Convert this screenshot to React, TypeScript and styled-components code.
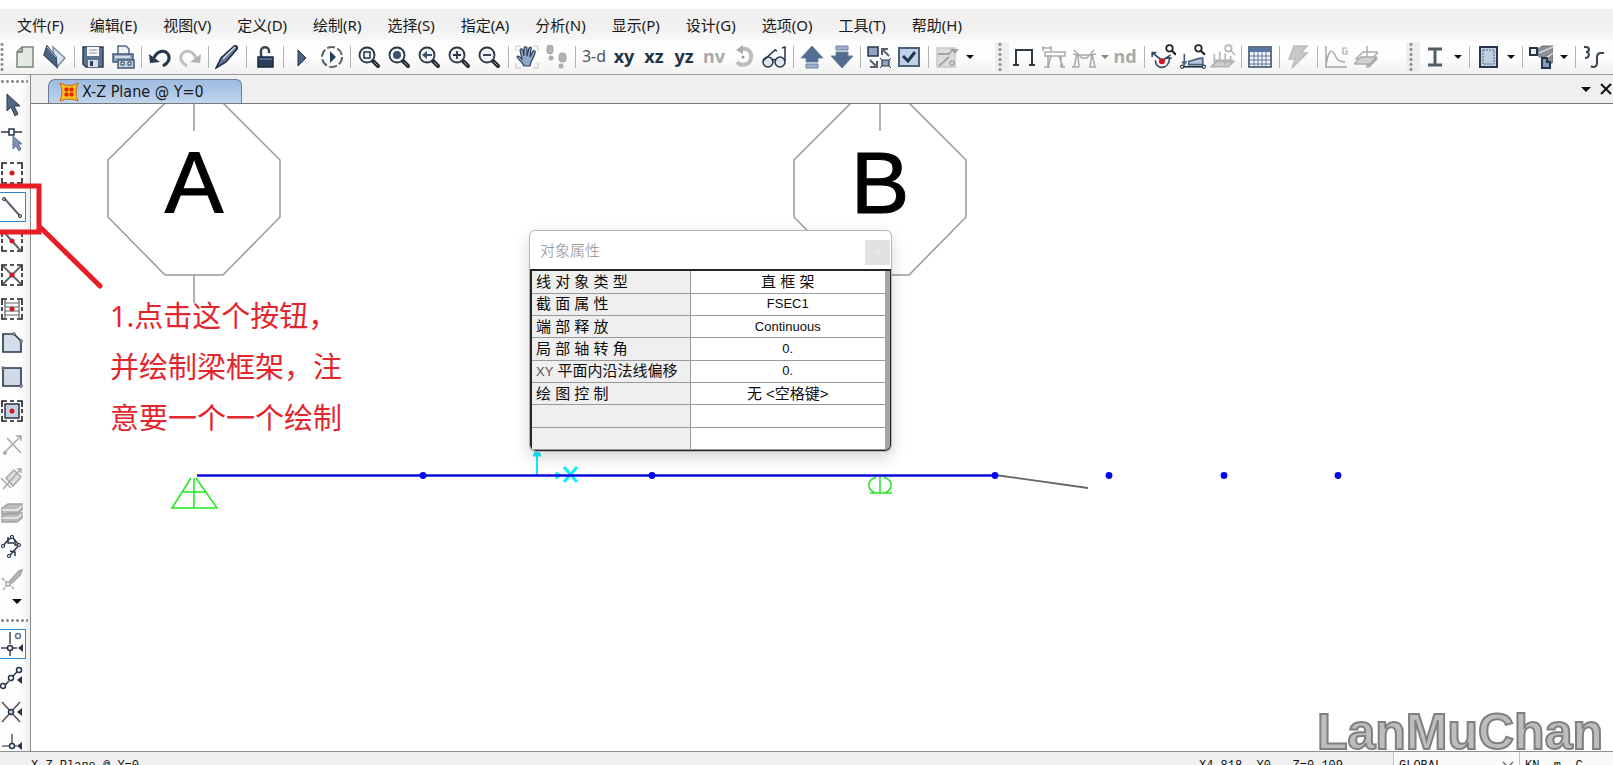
import React from 'react';
import styled, { createGlobalStyle } from 'styled-components';

const ink = '#26354a';
const steel = '#5f7797';
const pale = '#c9d6e8';
const off = '#a9a9a9';

const GlobalStyle = createGlobalStyle`
  * { box-sizing: border-box; }
  html, body { margin: 0; background: #fff; overflow: hidden; }
  body { font-family: "Noto Sans", "Noto Sans CJK SC", sans-serif; font-size: 15px; color: #1a1a1a; }
  button, select { font: inherit; color: inherit; }
  button { border: 0; padding: 0; background: none; }
`;

const Window = styled.div`
  position: relative;
  display: flex;
  flex-direction: column;
  height: 100vh;
  padding-top: 9px;
  overflow: hidden;
`;

const MenuBar = styled.nav`
  display: flex;
  flex: none;
  gap: 26px;
  height: 31px;
  padding: 0 17px;
  background: linear-gradient(#f0f0f0 60%, #f8f8f8);
`;

const MenuItem = styled.button`
  white-space: nowrap;
  line-height: 30px;
`;

const ToolbarRow = styled.div`
  display: flex;
  flex: none;
  height: 35px;
  background: linear-gradient(#fcfcfc, #fff 40%, #f1f1f1);
  border-bottom: 1px solid #9b9b9b;
  overflow: hidden;
`;

const Toolbar = styled.div<{ $end?: number }>`
  display: flex;
  flex: none;
  align-items: center;
  padding-right: ${p => p.$end ?? 0}px;
`;

const Grip = styled.div<{ $wide?: boolean }>`
  align-self: stretch;
  flex: none;
  width: ${p => (p.$wide ? 14 : 10)}px;
  margin: 2px 0;
  background:
    radial-gradient(circle, #8d8d8d 1px, transparent 2px) ${p => (p.$wide ? 3 : 0)}px 0 / 4px 5px repeat-y,
    ${p => (p.$wide ? '#eeeeee' : 'transparent')};
`;

const ToolButton = styled.button<{ $w?: number }>`
  display: flex;
  flex: none;
  align-items: center;
  justify-content: center;
  width: ${p => p.$w ?? 30}px;
  height: 30px;
`;

const Divider = styled.span<{ $w: number }>`
  flex: none;
  width: ${p => p.$w}px;
  height: 22px;
  background: linear-gradient(#b4b4b4, #b4b4b4) center / 1px 100% no-repeat;
`;

const ToolText = styled.span<{ $tone?: 'light' | 'off' }>`
  font-family: "Noto Sans", sans-serif;
  font-size: ${p => (p.$tone === 'light' ? 16 : 18)}px;
  font-weight: ${p => (p.$tone === 'light' ? 400 : 700)};
  line-height: 24px;
  white-space: nowrap;
  padding-bottom: 2px;
  color: ${p => (p.$tone === 'off' ? off : p.$tone === 'light' ? '#4a5560' : '#1f3444')};
`;

const Caret = styled.span<{ $tone?: string; $big?: boolean }>`
  border: ${p => (p.$big ? 5 : 4)}px solid transparent;
  border-top-color: ${p => p.$tone ?? '#111'};
  border-bottom: 0;
`;

const Workspace = styled.div`
  display: flex;
  flex: 1;
  min-height: 0;
`;

const SideBar = styled.aside`
  display: flex;
  flex: none;
  flex-direction: column;
  width: 30px;
  overflow: hidden;
  background: linear-gradient(90deg, #fdfdfd 70%, #efefef);
`;

const SideGrip = styled.div`
  flex: none;
  height: 13px;
  margin-right: 2px;
  background: radial-gradient(circle, #8d8d8d 1px, transparent 2px) 0 4px / 5px 5px repeat-x;
`;

const SideButton = styled.button<{ $on?: boolean }>`
  display: flex;
  flex: none;
  align-items: center;
  width: 26px;
  height: 30px;
  margin: 2px 0;
  background: ${p => (p.$on ? '#fff' : 'none')};
  border: 1px solid ${p => (p.$on ? '#2f86d2' : 'transparent')};
  border-left: 0;
`;

const SideMore = styled.button`
  display: flex;
  flex: none;
  justify-content: flex-end;
  align-items: flex-start;
  width: 22px;
  height: 16px;
  padding-top: 1px;
`;

const View = styled.main`
  display: flex;
  flex: 1;
  flex-direction: column;
  min-width: 0;
  border-left: 1px solid #8c8c8c;
`;

const TabStrip = styled.div`
  display: flex;
  flex: none;
  align-items: flex-end;
  justify-content: space-between;
  height: 29px;
  padding-left: 17px;
  background: #efefef;
  border-bottom: 1px solid #777;
`;

const Tab = styled.button`
  display: flex;
  align-items: center;
  gap: 3px;
  width: 194px;
  height: 24px;
  padding-left: 10px;
  font-family: "DejaVu Sans Condensed", "Noto Sans", sans-serif;
  font-size: 16px;
  line-height: 20px;
  white-space: nowrap;
  border: 1px solid #6c7d94;
  border-bottom: 0;
  border-radius: 7px 6px 0 0;
  background: linear-gradient(#9fbbe0, #a9c4e5 40%, #c0d6ee);
`;

const TabActions = styled.div`
  display: flex;
  align-self: center;
  gap: 8px;
`;

const SmallButton = styled.button`
  display: flex;
  align-items: center;
`;

const Canvas = styled.div`
  position: relative;
  flex: 1;
  min-height: 0;
  overflow: hidden;
  background: #fff;
`;

const Drawing = styled.svg`
  display: block;
  width: 100%;
  height: 100%;
`;

const GridLabel = styled.text`
  font-family: "Liberation Sans", Arial, sans-serif;
  font-size: 88px;
  text-anchor: middle;
  stroke: #000;
  stroke-width: 1px;
`;

const Dialog = styled.section`
  position: absolute;
  left: 498px;
  top: 126px;
  width: 363px;
  border: 1px solid #b5b5b5;
  border-radius: 6px;
  background: #fff;
  overflow: hidden;
  box-shadow: 0 6px 16px rgba(0, 0, 0, 0.16);
`;

const DialogHead = styled.header`
  display: flex;
  align-items: center;
  justify-content: space-between;
  height: 38px;
  padding-left: 10px;
`;

const DialogTitle = styled.h2`
  margin: 0;
  font-size: 15px;
  font-weight: 300;
  line-height: 20px;
  color: #8c8c8c;
`;

const DialogClose = styled.button`
  display: flex;
  align-items: center;
  justify-content: center;
  align-self: flex-end;
  width: 25px;
  height: 25px;
  margin: 0 1px 4px;
  background: #e2e2e2;
`;

const TableFrame = styled.div`
  padding-right: 5px;
  border: 2px solid #262626;
  border-width: 2px 1px 1px 2px;
  border-radius: 0 0 6px 6px;
  background: #a5a5a5;
`;

const PropTable = styled.table`
  width: 100%;
  height: 179px;
  table-layout: fixed;
  border-collapse: collapse;
  font-family: "Liberation Sans", "Noto Sans CJK SC", sans-serif;
  line-height: 16px;
  color: #0c0c0c;
`;

const PropRow = styled.tr`
  height: 22px;
`;

const PropName = styled.th`
  width: 158px;
  padding: 0 0 0 4px;
  font-weight: 400;
  text-align: left;
  white-space: nowrap;
  background: #efefef;
  border: solid #9a9a9a;
  border-width: 0 1px 1px 0;
`;

const PropValue = styled.td<{ $latin?: boolean }>`
  padding: 0;
  font-size: ${p => (p.$latin ? 13 : 15)}px;
  text-align: center;
  white-space: nowrap;
  background: #fff;
  border-bottom: 1px solid #9a9a9a;
`;

const Latin = styled.span`
  font-size: 13px;
  color: #555;
`;

const Note = styled.p`
  position: absolute;
  left: 79px;
  top: 186px;
  margin: 0;
  font-family: "Noto Sans", "Noto Sans CJK SC", sans-serif;
  font-size: 29px;
  line-height: 51px;
  white-space: nowrap;
  color: #e3262e;
`;

const Callout = styled.svg`
  position: absolute;
  left: 0;
  top: 180px;
  pointer-events: none;
`;

const Watermark = styled.div`
  position: absolute;
  right: 10px;
  bottom: 5px;
  font-family: "Liberation Sans", Arial, sans-serif;
  font-size: 50px;
  font-weight: 700;
  line-height: 56px;
  color: #bdbdbd;
  -webkit-text-stroke: 2px #808080;
`;

const StatusBar = styled.footer`
  display: flex;
  flex: none;
  align-items: flex-start;
  height: 14px;
  padding-left: 31px;
  overflow: hidden;
  font-family: "Liberation Mono", monospace;
  font-size: 12px;
  line-height: 16px;
  color: #111;
  background: #f0f0f0;
  border-top: 1px solid #8f8f8f;
`;

const StatusText = styled.span<{ $grow?: boolean }>`
  flex: ${p => (p.$grow ? 1 : 'none')};
  padding-top: 6px;
  white-space: pre;
`;

const Coordinates = styled(StatusText)`
  padding-right: 50px;
`;

const StatusField = styled.label`
  display: flex;
  flex: none;
  align-items: center;
  height: 26px;
  background: #fafafa;
  border-left: 1px solid #c4c4c4;
`;

const StatusSelect = styled.select<{ $w: number }>`
  width: ${p => p.$w}px;
  height: 26px;
  padding: 2px 0 0 5px;
  appearance: none;
  border: 0;
  border-radius: 0;
  background: none;
`;

const Svg = ({ children, s = 24 }: { children: React.ReactNode; s?: number }) => (
  <svg width={s} height={s} viewBox="0 0 24 24" fill="none" stroke={ink} strokeWidth="1.5" aria-hidden="true">
    {children}
  </svg>
);

const Lens = ({ children }: { children: React.ReactNode }) => (
  <Svg>
    <path d="M15 15l6 6" stroke="#222b36" strokeWidth="4" strokeLinecap="round" />
    <path d="M17 17l3.500 3.500" stroke="#8a96a5" strokeWidth="1" />
    <circle cx="10" cy="10" r="7.500" fill="#f1f4f8" stroke="#2c3440" strokeWidth="1.800" />
    {children}
  </Svg>
);

type Tool = { label: string; icon?: React.ReactNode; w?: number; sep?: number };
const sep = (w = 7): Tool => ({ label: '', sep: w });
const caret = (label: string, w = 16, tone?: string): Tool => ({ label, w, icon: <Caret $tone={tone} /> });

const mainTools: Tool[] = [
  { label: '新建', icon: <Svg><path d="M9 2h11v20H4V7z" fill="#e3e9e3" stroke="#7c877a" /><path d="M9 2v5H4" stroke="#6b7568" /></Svg> },
  { label: '打开', icon: <Svg><path d="M10 2l12 11-8 9-3-9z" fill="#dbe4ef" stroke="#7d8ea3" /><path d="M4 1l9 11 1 10L1 10z" fill="#4c6283" stroke="#3c4e6a" /><path d="M4 2l9 10" stroke="#b9c8da" strokeWidth="1" /></Svg> },
  sep(8),
  { label: '保存', icon: <Svg><path d="M2 2h20v20H5l-3-3z" fill="#5c7291" stroke="#2c3d55" /><path d="M6 2h12v9H6z" fill="#f4f6f8" stroke="none" /><path d="M8 5h8M8 8h8" stroke="#8b98a8" strokeWidth="1" /><path d="M7 15h10v7H7z" fill="#d5e0ec" stroke="none" /><path d="M9 16h3v5H9z" fill="#2c3d55" stroke="none" /></Svg> },
  { label: '打印', icon: <Svg><path d="M7 9V1h8l3 3v5" fill="#eef2f6" stroke="#55677f" /><path d="M2 9h20v8H2z" fill="#8ea2bd" stroke="#45597a" /><path d="M4 12h15" stroke="#e8eef6" /><path d="M7 15h16v8H7z" fill="#c3d3e6" stroke="#45597a" /><path d="M10 17h3v3h-3zM17 17h3v3h-3z" fill="#fff" strokeWidth="1" /></Svg> },
  sep(),
  { label: '撤销', icon: <Svg><path d="M6 13c3-7 10-9 14-4 3 5 0 9-5 12" stroke="#27364a" strokeWidth="3" /><path d="M1 9l1 9 10-1z" fill="#27364a" stroke="none" /></Svg> },
  { label: '重做', icon: <Svg><path d="M18 13C15 6 8 4 4 9c-3 5 0 9 5 12" stroke="#c0c0c0" strokeWidth="3" /><path d="M23 9l-1 9-10-1z" fill="#b3b3b3" stroke="none" /></Svg> },
  sep(),
  { label: '绘制', icon: <Svg><path d="M1 23l5-10L19 1c2-1 4 1 3 3L11 17z" fill="#60779b" stroke="#1f2d42" /><path d="M8 14L20 2" stroke="#cbd7e7" /></Svg> },
  sep(8),
  { label: '锁定', icon: <Svg><path d="M8 12V6c0-5 8-5 8 0v2" stroke="#3b4350" strokeWidth="2.500" /><path d="M5 12h15v10H5z" fill="#2c3f5b" stroke="#1c2a3f" /><path d="M6 14h13" stroke="#60779b" /></Svg> },
  sep(),
  { label: '运行', icon: <Svg><path d="M8 5l8 8-8 8z" fill="#4a6384" stroke="#20344f" strokeWidth="1" /></Svg> },
  { label: '运行分析', icon: <Svg><circle cx="12" cy="12" r="10" strokeWidth="2" strokeDasharray="8 2.470" stroke="#5a646f" /><path d="M10 6l6 6-6 6z" fill="#263f5e" stroke="none" /></Svg> },
  sep(),
  { label: '框选缩放', icon: <Lens><path d="M7 7h6v6H7z" strokeWidth="1.500" /></Lens> },
  { label: '全部缩放', icon: <Lens><circle cx="10" cy="10" r="4" fill="#3d516f" stroke="none" /></Lens> },
  { label: '上一缩放', icon: <Lens><path d="M5 10l5-4v3h5v2h-5v3z" fill="#3d516f" stroke="none" /></Lens> },
  { label: '放大', icon: <Lens><path d="M6 10h8M10 6v8" strokeWidth="1.800" /></Lens> },
  { label: '缩小', icon: <Lens><path d="M6 10h8" strokeWidth="1.800" /></Lens> },
  sep(8),
  { label: '平移', icon: <Svg><path d="M1 6V1h5M18 1h5v5M23 18v5h-5M6 23H1v-5" stroke="#c4c4c4" strokeWidth="1" /><path d="M9 21c-1-3-5-6-7-9 1-2 3 0 5 2L5 5c1-2 3-1 3 1l1 5V3c1-2 3-1 3 0v8l2-8c1-1 3-1 2 1l-1 8 3-6c1-1 3 0 2 2-1 4-3 7-4 9l-1 4z" fill="#8fa6c6" stroke="#30425c" strokeWidth="1.200" /></Svg> },
  { label: '漫游', icon: <Svg><g fill="#b3b3b3" stroke="#999" strokeWidth=".8"><rect x="2" y="0" width="6" height="9" rx="3" /><rect x="4" y="11" width="4" height="4" rx="1.500" /><rect x="14" y="8" width="7" height="9" rx="3" /><rect x="14" y="19" width="4" height="4" rx="1.500" /></g></Svg> },
  sep(),
  { label: '三维视图', icon: <ToolText $tone="light">3-d</ToolText> },
  { label: 'XY 平面', icon: <ToolText>xy</ToolText> },
  { label: 'XZ 平面', icon: <ToolText>xz</ToolText> },
  { label: 'YZ 平面', icon: <ToolText>yz</ToolText> },
  { label: 'NV 平面', icon: <ToolText $tone="off">nv</ToolText> },
  { label: '旋转', icon: <Svg><path d="M10 4c7-1 10 4 9 9-1 7-10 9-14 4" stroke="#bdbdbd" strokeWidth="4" /><path d="M11 0v9L4 5z" fill="#adadad" stroke="none" /><circle cx="11" cy="12" r="1.500" fill="#999" stroke="none" /></Svg> },
  { label: '显示选项', icon: <Svg><circle cx="6" cy="17" r="5" fill="#dfe6ee" /><circle cx="18" cy="17" r="5" fill="#dfe6ee" /><path d="M10 16c1-2 3-2 4 0M1 16L13 5l2 1M23 16V2l-3 1" /></Svg> },
  sep(8),
  { label: '上移', icon: <Svg><path d="M12 1l11 12h-5v4H6v-4H1z" fill="#536d92" stroke="#6d83a2" strokeWidth="1" /><path d="M6 19h12v4H6z" fill="#9db1ca" stroke="#6d83a2" strokeWidth="1" /></Svg> },
  { label: '下移', icon: <Svg><path d="M12 23L1 11h5V7h12v4h5z" fill="#536d92" stroke="#6d83a2" strokeWidth="1" /><path d="M6 1h12v4H6z" fill="#9db1ca" stroke="#6d83a2" strokeWidth="1" /></Svg> },
  sep(),
  { label: '对象收缩', icon: <Svg><path d="M1 2h10v9H1z" fill="#8ea4c2" /><path d="M22 11l-6-6M15 10V4h6M3 15l6 6M3 22h7v-6" stroke="#55606c" strokeWidth="2" /><path d="M15 15h7v6h-7z" fill="#8ea4c2" strokeWidth="1.200" /><path d="M13 13l2 2M24 13l-2 2M13 23l2-2M24 23l-2-2" strokeWidth="1" /></Svg> },
  { label: '显示设置', icon: <Svg><path d="M2 3h20v18H2z" fill="#c0d1e8" stroke="#4c6078" strokeWidth="2" /><path d="M6 11l5 5 7-9" strokeWidth="3" stroke="#24384f" /></Svg> },
  sep(8),
  { label: '指定', icon: <Svg><path d="M2 3h18v19H2z" fill="#dcdcdc" stroke="#c8c8c8" /><path d="M3 9h11l4-5M4 21l10-9" stroke="#a3a3a3" strokeWidth="2" /><path d="M15 4h9l-4 5z" fill="#a3a3a3" stroke="none" /><circle cx="17" cy="18" r="2" stroke="#a3a3a3" /></Svg> },
  caret('指定选项'),
];

const displayTools: Tool[] = [
  { label: '未变形', icon: <Svg><path d="M4 21V5h16v16M1 20h6M17 20h6" stroke="#2e3a46" strokeWidth="2" /></Svg> },
  { label: '显示荷载', icon: <Svg><g stroke={off}><path d="M1 1v5M9 1v5M1 3h8" /><path d="M3 7h20v4H3zM6 11v11M9 11L6 22M19 11v11M17 11l4 11M2 22h6M18 22h5" /></g></Svg> },
  { label: '显示变形', icon: <Svg><g stroke={off}><path d="M1 9l5 1h13l5-1M2 5l8 8h5l7-8" /><path d="M5 9L2 22M6 10l1 12M20 9l-2 13M20 9l3 13M0 22h7M17 22h7" /></g></Svg> },
  caret('变形选项', 11, '#888'),
  { label: 'ND', icon: <ToolText $tone="off">nd</ToolText> },
  sep(8),
  { label: '节点查看', icon: <Svg s={26}><path d="M11 15L2 8M2 12V8h4M12 15l7-5M5 15c0 9 12 9 13-1M15 13h5" stroke="#334760" /><circle cx="11" cy="16" r="2.800" fill="#d3161f" stroke="none" /><circle cx="18" cy="4" r="3" stroke="#222" strokeWidth="1.600" /><path d="M20 6l4 4" stroke="#222" strokeWidth="2" /></Svg> },
  { label: '框架查看', icon: <Svg s={26}><path d="M4 9v10M2 16l2 3 2-3M8 19v-3c4 0 6-3 13-3v6z" fill="#b4c6df" stroke="#47607f" /><path d="M2 21h20" stroke="#1d2c42" /><circle cx="2" cy="21" r="1.500" fill="#fff" strokeWidth="1" /><circle cx="22" cy="21" r="1.500" fill="#fff" strokeWidth="1" /><circle cx="17" cy="4" r="3" stroke="#222" strokeWidth="1.600" /><path d="M19 6l4 4" stroke="#222" strokeWidth="2" /></Svg> },
  { label: '面查看', icon: <Svg s={26}><g stroke="#b4b4b4"><path d="M1 21l5-5h16l-5 5z" fill="#ccc" /><path d="M4 9v9M9 7v9M14 9v10M19 11v7M3 15h18" /><circle cx="17" cy="4" r="3" /><path d="M19 6l4 4" /></g></Svg> },
  sep(),
  { label: '表格', icon: <Svg><path d="M1 2h22v20H1z" fill="#f2f6fb" stroke="#30455f" strokeWidth="1.500" /><path d="M2 3h20v4H2z" fill="#5877a5" stroke="none" /><path d="M2 11h20M2 15h20M2 19h20M6 7v15M10 7v15M14 7v15M18 7v15" stroke="#60779b" strokeWidth="1" /></Svg> },
  sep(8),
  { label: '快速分析', icon: <Svg><path d="M8 1h13l-6 7h6L6 23l3-9H3z" fill="#c8c8c8" stroke="#bcbcbc" /></Svg> },
  sep(8),
  { label: '曲线', icon: <Svg><path d="M2 1v21h21M2 20C5 2 8 4 12 12c2 4 5 5 9 5" stroke="#a6a6a6" /><path d="M23 3h-4v6h4V6h-2" stroke="#a6a6a6" strokeWidth="1.200" /></Svg> },
  { label: '层显示', icon: <Svg><g stroke="#adadad"><path d="M9 7h15l-6 7H2zM13 1v22" /><path d="M0 19l7-7h15l-6 7z" fill="#d2d2d2" /><path d="M14 22l9-9" strokeWidth="3" /></g></Svg> },
];

const sectionTools: Tool[] = [
  { label: '框架截面', icon: <Svg><path d="M5 4h14M5 20h14" stroke="#525c65" strokeWidth="3" /><path d="M12 4v16" stroke="#525c65" strokeWidth="3" /></Svg> },
  caret('框架截面选项'),
  sep(),
  { label: '面截面', icon: <Svg><path d="M4 2h17v20H4z" fill="#bfcfe2" stroke="#27364a" strokeWidth="2" /><path d="M7 5h11v14H7z" stroke="#55677f" strokeDasharray="2 1" strokeWidth="1" /></Svg> },
  caret('面截面选项'),
  sep(),
  { label: '实体截面', icon: <Svg><path d="M9 4l4-3h11v7l-9 4h-5zM16 16l8-7v8l-6 5z" fill="#8a9095" stroke="#6c7277" strokeWidth="1" /><path d="M10 8L24 2M16 14l8-6" stroke="#d8d8d8" /><path d="M1 3h7v7H1z" fill="#eee" strokeWidth="2" /><path d="M13 13h5v4h3v6h-8z" fill="#7f9cc4" strokeWidth="2" /></Svg> },
  caret('实体截面选项'),
  sep(),
  { label: '连接', icon: <Svg><path d="M2 2h2c4 0 4 5 0 5 4 0 4 6-1 6M22 8h-3c-3 0-4 1-4 4v6c0 4-4 5-6 3" stroke="#3b4550" strokeWidth="2" /></Svg> },
];

const frameCorners = 'M2 8V2h5M10 2h4M17 2h5v6M22 10v4M22 17v5h-5M14 22h-4M7 22H2v-5M2 14v-4';
const Dashed = ({ children }: { children?: React.ReactNode }) => (
  <Svg><path d={frameCorners} stroke="#1c1c1c" strokeWidth="1.600" />{children}</Svg>
);
const RedDot = () => <circle cx="12" cy="12" r="2.500" fill="#d3161f" stroke="none" />;

const drawTools: Tool[] = [
  { label: '选择', icon: <Svg><path d="M7 1v17l4-4 4 9 3-2-4-8h6z" fill="#536781" stroke="#2b3b50" strokeWidth="1" /></Svg> },
  { label: '重塑', icon: <Svg><path d="M1 5h21" strokeWidth="1.500" /><path d="M9 2h5v6H9z" fill="#fff" /><path d="M13 9v13l3-3 3 5 2-2-3-5h4z" fill="#7c93b2" stroke="#5f7797" strokeWidth="1" /></Svg> },
  { label: '绘制节点', icon: <Dashed><RedDot /></Dashed> },
  { label: '绘制框架', icon: <Svg><path d="M4 3l16 18" stroke="#5a646e" strokeWidth="2" /><circle cx="4" cy="4" r="1.500" fill="#ccc" strokeWidth="1" /><circle cx="20" cy="21" r="1.500" fill="#ccc" strokeWidth="1" /></Svg> },
  { label: '快速绘制框架', icon: <Dashed><path d="M3 2l18 20" strokeWidth="2" stroke="#5a646e" /><RedDot /></Dashed> },
  { label: '快速绘制支撑', icon: <Dashed><path d="M3 3l18 18M21 3L3 21" strokeWidth="1.800" stroke="#5a646e" /><RedDot /></Dashed> },
  { label: '快速绘制次梁', icon: <Dashed><path d="M5 2v20M19 2v20M5 6h14M5 10h14M5 14h14M5 18h14" strokeWidth="1.200" stroke="#5a646e" /><RedDot /></Dashed> },
  { label: '绘制多边形面', icon: <Svg><path d="M3 3h11l7 7v11H3z" fill="#d3deec" strokeWidth="1.600" /><circle cx="14" cy="3" r="1.500" fill="#999" strokeWidth=".5" /><circle cx="21" cy="10" r="1.500" fill="#999" strokeWidth=".5" /></Svg> },
  { label: '绘制矩形面', icon: <Svg><path d="M3 3h18v18H3z" fill="#cfdae9" strokeWidth="1.600" /><circle cx="3" cy="3" r="1.500" fill="#999" strokeWidth=".5" /><circle cx="21" cy="21" r="1.500" fill="#999" strokeWidth=".5" /></Svg> },
  { label: '快速绘制面', icon: <Dashed><path d="M5 5h14v14H5z" fill="#c3d1e3" /><RedDot /></Dashed> },
  { label: '绘制连接', icon: <Svg><path d="M7 5l14 15M4 20L21 3M16 3h5v5" stroke={off} strokeWidth="1.500" /><circle cx="5" cy="20" r="2" fill={off} stroke="none" /></Svg> },
  { label: '绘制面连接', icon: <Svg><path d="M6 11l8-8 7 7-8 9z" fill="#ddd" stroke={off} /><path d="M1 11l10 10M3 22L21 2M17 2h4v4" stroke={off} /></Svg> },
  { label: '绘制实体', icon: <Svg><path d="M2 7l6-4h14v6l-5 4H2zM2 15l6-3h14v5l-5 4H2z" fill="#bbb" stroke="#a3a3a3" /><path d="M2 9h15l5-4M2 17h15l5-4" stroke="#eee" /></Svg> },
  { label: '绘制参考点', icon: <Svg><path d="M3 11l4-5 5-4 7 8M9 21l4-4 6-7" /><path d="M8 2v6h6M15 5v5h5M10 16l5 1v4" /><g fill="#fff" strokeWidth="1.200"><circle cx="3" cy="11" r="1.500" /><circle cx="12" cy="2" r="1.500" /><circle cx="19" cy="10" r="1.500" /><circle cx="9" cy="21" r="1.500" /></g></Svg> },
  { label: '编辑绘制', icon: <Svg><path d="M10 12l9-10 3-1-2 5-8 8z" fill="#bbb" stroke="#a3a3a3" /><path d="M2 9l4 4M3 21l4-5M14 20l-4-4" stroke={off} strokeDasharray="3 1" /><circle cx="8" cy="15" r="2" stroke={off} /></Svg> },
];

const snapMark = <path d="M23 12v8l-5-4z" fill={ink} stroke="none" />;
const snapTools: Tool[] = [
  { label: '捕捉节点', icon: <Svg><path d="M10 0v12M10 19v5M1 16h6M13 16h4" stroke="#444" /><circle cx="10" cy="16" r="2.500" /><circle cx="18" cy="4" r="2.500" stroke={steel} />{snapMark}</Svg> },
  { label: '捕捉端点和中点', icon: <Svg><path d="M5 19l4-4M13 10l4-4" /><circle cx="3" cy="20" r="2.500" /><circle cx="11" cy="12" r="2.500" /><circle cx="19" cy="4" r="2.500" /><path d="M22 10v8l-5-4z" fill={ink} stroke="none" /></Svg> },
  { label: '捕捉交点', icon: <Svg><path d="M2 2l18 20M20 2L2 22" stroke="#555" strokeWidth="1.600" /><circle cx="11" cy="12" r="2.500" fill={pale} /><path d="M22 8v8l-5-4z" fill={ink} stroke="none" /></Svg> },
  { label: '捕捉垂足', icon: <Svg><path d="M12 0v9M2 12h8M14 12h3" stroke="#666" strokeWidth="1.600" /><circle cx="12" cy="12" r="2.500" /><path d="M22 8v8l-5-4z" fill={ink} stroke="none" /></Svg> },
];

const menus = ['文件(F)', '编辑(E)', '视图(V)', '定义(D)', '绘制(R)', '选择(S)', '指定(A)', '分析(N)', '显示(P)', '设计(G)', '选项(O)', '工具(T)', '帮助(H)'];

const properties: { name: React.ReactNode; value: string; latin?: boolean }[] = [
  { name: '线 对 象 类 型', value: '直 框 架' },
  { name: '截 面 属 性', value: 'FSEC1', latin: true },
  { name: '端 部 释 放', value: 'Continuous', latin: true },
  { name: '局 部 轴 转 角', value: '0.', latin: true },
  { name: <><Latin>XY</Latin> 平面内沿法线偏移</>, value: '0.', latin: true },
  { name: '绘 图 控 制', value: '无 <空格键>' },
  { name: '', value: '' },
  { name: '', value: '' },
];

const Tools = ({ items }: { items: Tool[] }) => (
  <>
    {items.map((t, i) =>
      t.sep ? <Divider key={i} $w={t.sep} /> : <ToolButton key={i} $w={t.w} aria-label={t.label}>{t.icon}</ToolButton>
    )}
  </>
);

/* Grid bubble: an octagon hung on its grid line, drawn around x = 0. */
const GridBubble = ({ x, name }: { x: number; name: string }) => (
  <g transform={`translate(${x} 0)`}>
    <path d="M-29 -1L-86 56V113L-29 171H29L86 113V56L29 -1M0 0V27M0 171V199" fill="none" stroke="#999" strokeWidth="1.500" />
    <GridLabel x="0" y="109">{name}</GridLabel>
  </g>
);

const Model = () => (
  <Drawing>
    <GridBubble x={163} name="A" />
    <GridBubble x={849} name="B" />
    <g fill="none" stroke="#1fe81f" strokeWidth="1.500">
      <path d="M160 374L141 404H186L165 374M163 374V404M151 388H175" />
      <path d="M849 372V389M845 373C835 377 836 385 844 389M853 373C863 377 862 385 854 389M839 389H861" />
    </g>
    <g fill="none" stroke="#0ceefb">
      <path d="M506 371V346" strokeWidth="2" />
      <path d="M502 352L506 344L510 352z" fill="#0ceefb" strokeWidth="1" />
      <path d="M525 368L531 371L525 375z" fill="#0ceefb" strokeWidth="1" />
      <path d="M533 363L546 378M546 363L533 378" strokeWidth="3" />
    </g>
    <path d="M964 371L1057 384" stroke="#666" strokeWidth="1.800" />
    <path d="M166 371.500H964" stroke="#0a0adf" strokeWidth="2.400" />
    {[392, 621, 964, 1078, 1193, 1307].map(x => <circle key={x} cx={x} cy="371.500" r="3.400" fill="#0505f5" />)}
  </Drawing>
);

export default function App() {
  return (
    <Window>
      <GlobalStyle />
      <MenuBar>{menus.map(m => <MenuItem key={m}>{m}</MenuItem>)}</MenuBar>
      <ToolbarRow>
        <Toolbar $end={17}><Grip /><Tools items={mainTools} /></Toolbar>
        <Toolbar $end={25}><Grip $wide /><Tools items={displayTools} /></Toolbar>
        <Toolbar><Grip $wide /><Tools items={sectionTools} /></Toolbar>
      </ToolbarRow>
      <Workspace>
        <SideBar>
          <SideGrip />
          {drawTools.map(t => <SideButton key={t.label} $on={t.label === '绘制框架'} aria-label={t.label}>{t.icon}</SideButton>)}
          <SideMore aria-label="更多"><Caret $big /></SideMore>
          <SideGrip />
          {snapTools.map(t => <SideButton key={t.label} $on={t.label === '捕捉节点'} aria-label={t.label}>{t.icon}</SideButton>)}
        </SideBar>
        <View>
          <TabStrip>
            <Tab>
              <svg width="20" height="20" viewBox="0 0 20 20" aria-hidden="true">
                <path d="M1 1Q10 6 19 1Q15 10 19 19Q10 15 1 19Q5 10 1 1z" fill="#f7c51e" stroke="#d0600e" />
                <path d="M6 6h3v3H6zM11 6h3v3h-3zM6 11h3v3H6zM11 11h3v3h-3z" fill="#e8260c" stroke="#e8260c" />
              </svg>
              X-Z Plane @ Y=0
            </Tab>
            <TabActions>
              <SmallButton aria-label="视图列表"><Caret $big /></SmallButton>
              <SmallButton aria-label="关闭视图">
                <svg width="14" height="14" viewBox="0 0 14 14" aria-hidden="true"><path d="M2 2l10 10M12 2L2 12" stroke="#111" strokeWidth="2" /></svg>
              </SmallButton>
            </TabActions>
          </TabStrip>
          <Canvas>
            <Model />
            <Note>1.点击这个按钮，<br />并绘制梁框架，注<br />意要一个一个绘制</Note>
            <Dialog aria-label="对象属性">
              <DialogHead>
                <DialogTitle>对象属性</DialogTitle>
                <DialogClose aria-label="关闭">
                  <svg width="8" height="8" viewBox="0 0 8 8" aria-hidden="true"><path d="M1 2l3 3 3-3" fill="none" stroke="#f4f4f4" /></svg>
                </DialogClose>
              </DialogHead>
              <TableFrame>
                <PropTable>
                  <tbody>
                    {properties.map((p, i) => (
                      <PropRow key={i}>
                        <PropName scope="row">{p.name}</PropName>
                        <PropValue $latin={p.latin}>{p.value}</PropValue>
                      </PropRow>
                    ))}
                  </tbody>
                </PropTable>
              </TableFrame>
            </Dialog>
          </Canvas>
        </View>
      </Workspace>
      <StatusBar>
        <StatusText $grow>X-Z Plane @ Y=0</StatusText>
        <Coordinates>{'X4.818  Y0   Z=0.109'}</Coordinates>
        <StatusField>
          <StatusSelect $w={107} aria-label="坐标系"><option>GLOBAL</option></StatusSelect>
          <svg width="18" height="18" viewBox="0 0 18 18" aria-hidden="true"><path d="M2 6l5 5 5-5" fill="none" stroke="#777" strokeWidth="1.500" /></svg>
        </StatusField>
        <StatusField>
          <StatusSelect $w={93} aria-label="单位"><option>KN, m, C</option></StatusSelect>
        </StatusField>
      </StatusBar>
      <Callout width="110" height="116" viewBox="0 0 110 116" fill="none" stroke="#e81c24" aria-hidden="true">
        <path d="M-4 6H39V52H-4" strokeWidth="5" />
        <path d="M41 48L100 106" strokeWidth="5" strokeLinecap="round" />
      </Callout>
      <Watermark>LanMuChan</Watermark>
    </Window>
  );
}
